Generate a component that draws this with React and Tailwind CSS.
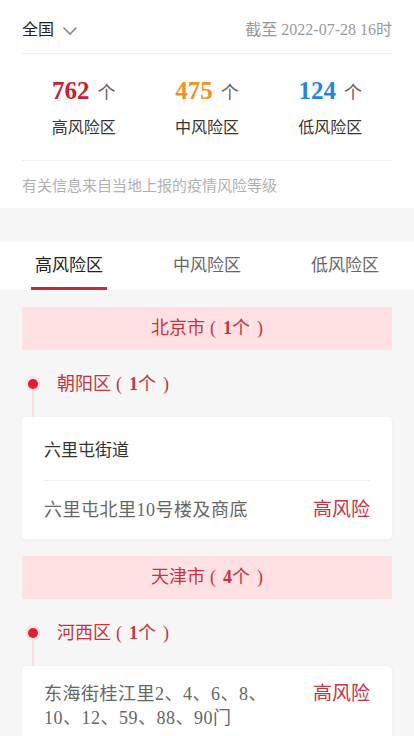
import { useState } from 'react'

const font = { fontFamily: '"Liberation Serif", "Noto Sans CJK SC", serif' }

const stats = [
  { num: 762, label: '高风险区', color: 'text-[#c8202e]' },
  { num: 475, label: '中风险区', color: 'text-[#f5901a]' },
  { num: 124, label: '低风险区', color: 'text-[#1a87e8]' },
]

const tabs = ['高风险区', '中风险区', '低风险区']

const data = [
  {
    city: '北京市',
    count: 1,
    districts: [
      {
        name: '朝阳区',
        count: 1,
        street: '六里屯街道',
        items: ['六里屯北里10号楼及商底'],
      },
    ],
  },
  {
    city: '天津市',
    count: 4,
    districts: [
      {
        name: '河西区',
        count: 1,
        items: ['东海街桂江里2、4、6、8、10、12、59、88、90门'],
      },
    ],
  },
]

const Chevron = () => (
  <svg width="16" height="10" viewBox="0 0 16 10" fill="none" className="ml-[8px] mt-[2px]">
    <path d="M1.5 1.5 L8 8 L14.5 1.5" stroke="#888" strokeWidth="1.6" />
  </svg>
)

// "北京市 ( 1个 )" style title with the loose brackets of the original
const CountTitle = ({ name, count }) => (
  <>
    {name}
    <span className="ml-[5px] mr-[7px]">(</span>
    <b className="font-bold">{count}</b>个
    <span className="ml-[7px]">)</span>
  </>
)

const App = () => {
  const [active, setActive] = useState(0)

  return (
    <div className="w-[414px] min-h-[736px] bg-[#f6f6f6] overflow-hidden" style={font}>
      {/* summary */}
      <div className="bg-white px-[22px]">
        <div className="h-[54px] pt-[6px] flex items-center justify-between border-b border-[#eeeeee]">
          <div className="flex items-center text-[16px] text-[#222]">
            全国
            <Chevron />
          </div>
          <div className="text-[16px] text-[#999]">截至 2022-07-28 16时</div>
        </div>
        <div className="h-[107px] grid grid-cols-3 border-b border-[#eeeeee]">
          {stats.map((s) => (
            <div key={s.label} className="flex flex-col items-center pt-[21px]">
              <div className="flex items-baseline leading-[32px]">
                <span className={`text-[25px] font-bold ${s.color}`}>{s.num}</span>
                <span className="text-[18px] text-[#666] ml-[8px]">个</span>
              </div>
              <div className="text-[16px] text-[#333] mt-[7px] leading-[24px]">{s.label}</div>
            </div>
          ))}
        </div>
        <div className="h-[47px] pt-[3px] flex items-center text-[15px] text-[#b0b0b0]">
          有关信息来自当地上报的疫情风险等级
        </div>
      </div>

      {/* tabs */}
      <div className="mt-[34px] h-[48px] bg-white grid grid-cols-3">
        {tabs.map((t, i) => (
          <button
            key={t}
            onClick={() => setActive(i)}
            className={`relative flex items-center justify-center text-[17px] ${
              active === i ? 'text-[#222]' : 'text-[#666]'
            }`}
          >
            {t}
            {active === i && (
              <span className="absolute bottom-0 left-1/2 -translate-x-1/2 w-[76px] h-[3px] bg-[#b5303c]" />
            )}
          </button>
        ))}
      </div>

      {/* list */}
      <div className="px-[22px] pt-[17px]">
        {data.map((c) => (
          <div key={c.city} className="mb-[17px]">
            <div className="h-[43px] bg-[#ffe1e4] flex items-center justify-center text-[18px] text-[#c9333e]">
              <CountTitle name={c.city} count={c.count} />
            </div>
            {c.districts.map((d) => (
              <div key={d.name}>
                <div className="relative h-[67px] flex items-start pt-[21px]">
                  <span className="absolute left-[3px] top-[26px] w-[15px] h-[15px] rounded-full bg-[#fde3e5] flex items-center justify-center">
                    <span className="w-[10px] h-[10px] rounded-full bg-[#e1202d]" />
                  </span>
                  <span className="absolute left-[10px] top-[41px] bottom-0 w-[2px] bg-[#fbdde0]" />
                  <div className="ml-[35px] text-[18px] leading-[26px] text-[#c9333e]">
                    <CountTitle name={d.name} count={d.count} />
                  </div>
                </div>
                <div className="bg-white rounded-[4px] shadow-[0_1px_4px_rgba(0,0,0,0.05)] px-[22px]">
                  {d.street && (
                    <div className="pt-[23px] pb-[18px] leading-[22px] text-[17px] text-[#333] border-b border-[#eeeeee]">
                      {d.street}
                    </div>
                  )}
                  {d.items.map((it) => (
                    <div
                      key={it}
                      className={`flex justify-between items-start text-[18px] leading-[24px] ${
                        d.street ? 'py-[17px]' : 'pt-[16px] pb-[14px]'
                      }`}
                    >
                      <div className="w-[245px] text-[#666] tracking-[0.5px]">{it}</div>
                      <div className="text-[#c9333e] text-[19px]">高风险</div>
                    </div>
                  ))}
                </div>
              </div>
            ))}
          </div>
        ))}
      </div>
    </div>
  )
}

export default App
